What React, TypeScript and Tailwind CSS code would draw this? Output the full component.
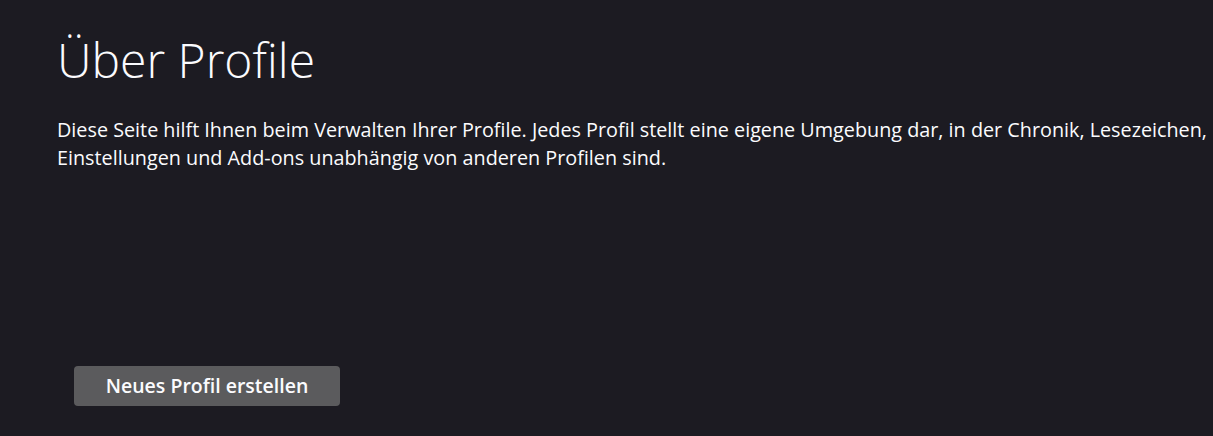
export default function App() {
  return (
    <div
      className="h-[436px] w-[1213px] overflow-hidden bg-[#1c1b22] text-[#fbfbfe]"
      style={{ fontFamily: '"Open Sans", "Noto Sans", sans-serif' }}
    >
      <div className="w-[1400px] pl-[57px] pt-[31px]">
        <h1 className="text-[48px] font-light leading-[1.2]">Über Profile</h1>
        <p className="mt-[27px] text-[19.8px] leading-[28px]">
          Diese Seite hilft Ihnen beim Verwalten Ihrer Profile. Jedes Profil stellt eine eigene Umgebung dar, in der Chronik, Lesezeichen,
          <br />
          Einstellungen und Add-ons unabhängig von anderen Profilen sind.
        </p>
        <div className="mt-[194px] pl-[17px]">
          <button className="h-[40px] w-[266px] rounded-[4px] bg-[#5b5b5d] text-[19.5px] font-semibold text-[#fbfbfe]">
            Neues Profil erstellen
          </button>
        </div>
      </div>
    </div>
  );
}
